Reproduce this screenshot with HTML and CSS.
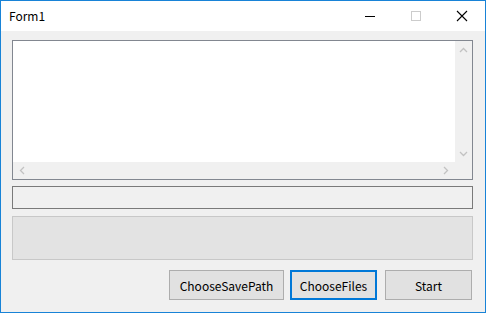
FILE: index.html
```html
<!DOCTYPE html>
<html lang="en">
<head>
    <meta charset="UTF-8">
    <title>Form1</title>
    <link rel="stylesheet" href="styles.css">
</head>
<body>
    <div class="window">
        <div class="titlebar">
            <span class="title">Form1</span>
            <div class="caption-buttons">
                <span class="cap cap-min">
                    <svg width="12" height="12" viewBox="0 0 12 12"><path d="M1 6.5H11" stroke="#000" stroke-width="1"/></svg>
                </span>
                <span class="cap cap-max">
                    <svg width="12" height="12" viewBox="0 0 12 12"><rect x="1.5" y="1.5" width="9" height="9" fill="none" stroke="#cccccc" stroke-width="1"/></svg>
                </span>
                <span class="cap cap-close">
                    <svg width="12" height="12" viewBox="0 0 12 12"><path d="M1 1L11 11M11 1L1 11" stroke="#000" stroke-width="1.1"/></svg>
                </span>
            </div>
        </div>
        <div class="client">
            <div class="listbox">
                <div class="list-main">
                    <div class="list-content"></div>
                    <div class="vscroll">
                        <svg width="9" height="6" viewBox="0 0 9 6"><path d="M1 5L4.5 1.5L8 5" fill="none" stroke="#c2c2c2" stroke-width="1.3"/></svg>
                        <svg width="9" height="6" viewBox="0 0 9 6"><path d="M1 1L4.5 4.5L8 1" fill="none" stroke="#c2c2c2" stroke-width="1.3"/></svg>
                    </div>
                </div>
                <div class="hscroll-row">
                    <div class="hscroll">
                        <svg width="6" height="9" viewBox="0 0 6 9"><path d="M5 1L1.5 4.5L5 8" fill="none" stroke="#c2c2c2" stroke-width="1.3"/></svg>
                        <svg width="6" height="9" viewBox="0 0 6 9"><path d="M1 1L4.5 4.5L1 8" fill="none" stroke="#c2c2c2" stroke-width="1.3"/></svg>
                    </div>
                    <div class="corner"></div>
                </div>
            </div>
            <div class="textbox"></div>
            <div class="panel"></div>
            <div class="buttons">
                <button class="btn btn-save">ChooseSavePath</button>
                <button class="btn btn-files focused">ChooseFiles</button>
                <button class="btn btn-start">Start</button>
            </div>
        </div>
    </div>
</body>
</html>
```

FILE: styles.css
```css
html, body {
    margin: 0;
    padding: 0;
    background-color: #f0f0f0;
}
.window {
    width: 486px;
    height: 313px;
    box-sizing: border-box;
    border: 1px solid #1883d7;
    background-color: #f0f0f0;
    display: flex;
    flex-direction: column;
    font-family: "Noto Sans CJK SC", "Noto Sans", sans-serif;
    font-size: 12px;
    color: #000;
}
.titlebar {
    height: 30px;
    background-color: #fff;
    display: flex;
    align-items: center;
    justify-content: space-between;
}
.title {
    margin-left: 8px;
    margin-top: -1px;
    font-size: 12px;
}
.caption-buttons {
    display: flex;
    height: 30px;
}
.cap {
    width: 46px;
    height: 30px;
    display: flex;
    align-items: center;
    justify-content: center;
}
.client {
    flex: 1;
    padding: 9px 12px 0 11px;
    display: flex;
    flex-direction: column;
}
.listbox {
    height: 140px;
    box-sizing: border-box;
    border: 1px solid #828790;
    background-color: #fff;
    display: flex;
    flex-direction: column;
}
.list-main {
    flex: 1;
    display: flex;
}
.list-content {
    flex: 1;
}
.vscroll {
    width: 17px;
    background-color: #f0f0f0;
    display: flex;
    flex-direction: column;
    align-items: center;
    justify-content: space-between;
    padding: 6px 0 5px;
    box-sizing: border-box;
}
.hscroll-row {
    height: 17px;
    display: flex;
}
.hscroll {
    flex: 1;
    background-color: #f0f0f0;
    display: flex;
    align-items: center;
    justify-content: space-between;
    padding: 0 6px 0 6px;
}
.corner {
    width: 17px;
    background-color: #f0f0f0;
}
.textbox {
    height: 23px;
    margin-top: 6px;
    box-sizing: border-box;
    border: 1px solid #7a7a7a;
    background-color: #f0f0f0;
}
.panel {
    height: 44px;
    margin-top: 7px;
    box-sizing: border-box;
    border: 1px solid #c8c8c8;
    background-color: #e3e3e3;
}
.buttons {
    margin-top: 10px;
    display: flex;
    justify-content: flex-end;
    padding-right: 1px;
}
.btn {
    height: 30px;
    box-sizing: border-box;
    border: 1px solid #adadad;
    background-color: #e1e1e1;
    font-family: "Noto Sans CJK SC", "Noto Sans", sans-serif;
    font-size: 12px;
    color: #000;
    padding: 0;
}
.btn-save {
    width: 115px;
}
.btn-files {
    width: 87px;
    margin-left: 6px;
}
.btn-start {
    width: 87px;
    margin-left: 8px;
}
.focused {
    border: 2px solid #0078d7;
}
```
